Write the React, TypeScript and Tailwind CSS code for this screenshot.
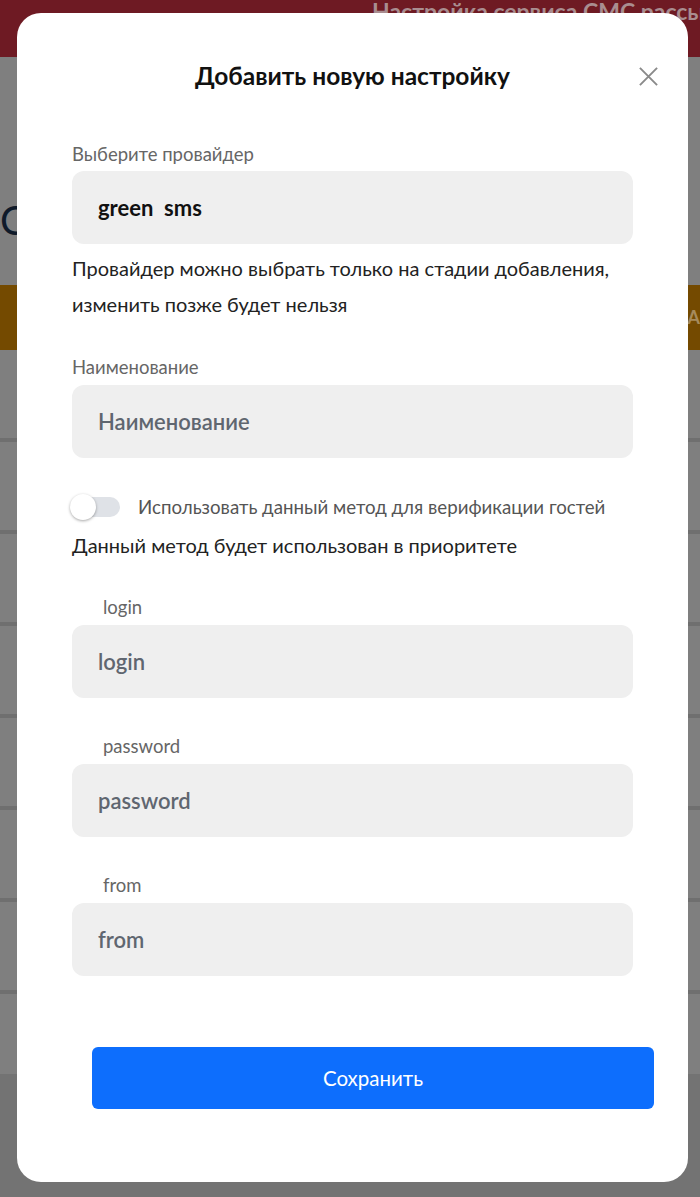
import React, { FC } from "react";

const font = { fontFamily: "Lato, 'Noto Sans', sans-serif" };

interface FieldProps {
  label: string;
  placeholder: string;
  indentLabel?: boolean;
  className?: string;
}

const Field: FC<FieldProps> = ({ label, placeholder, indentLabel, className }) => (
  <div className={className}>
    <p className={`text-[18.5px] leading-[20px] text-[#666] ${indentLabel ? "pl-[31px]" : ""}`}>{label}</p>
    <div className="mt-[8px] flex h-[73px] items-center rounded-[12px] bg-[#efefef] pl-[26px]">
      <span className="text-[22px] font-semibold text-[#5f6670]">{placeholder}</span>
    </div>
  </div>
);

const Background: FC = () => (
  <div className="flex h-[1197px] w-[700px] flex-col bg-[#7f7f7f]">
    <div className="h-[57px] bg-[#6e1a23] pl-[372px]">
      <p className="whitespace-nowrap text-[23px] font-bold leading-[22px] text-[#a98d90]">
        Настройка сервиса СМС рассылки
      </p>
    </div>
    <div className="h-[141px]" />
    <p className="h-[87px] text-[40px] leading-[44px] text-[#0f1a2a]">Сорт</p>
    <div className="flex h-[65px] items-center justify-end bg-[#744a00]">
      <span className="text-[18px] font-bold text-[#a68a5c]">ДА</span>
    </div>
    <div className="flex flex-col">
      {[0, 1, 2, 3, 4, 5, 6].map((i) => (
        <div key={i} className="h-[92px] border-b-[4px] border-[#6f6f6f]" />
      ))}
    </div>
    <div className="mt-[80px] flex-1 bg-[#737373]" />
  </div>
);

export default function App() {
  return (
    <div className="relative h-[1197px] w-[700px] overflow-hidden" style={font}>
      <Background />
      <div className="absolute left-[17px] top-[13px] h-[1169px] w-[671px] rounded-[24px] bg-white px-[55px] pt-[49px]">
        <div className="relative flex h-[28px] items-center justify-center">
          <h2 className="text-[24.5px] font-bold leading-[28px] text-[#111]">Добавить новую настройку</h2>
          <button className="absolute right-[-26px] top-[4px] text-[#8a8a8a]">
            <svg width="21" height="21" viewBox="0 0 22 22" fill="none" stroke="currentColor" strokeWidth="2">
              <path d="M2 2L20 20M20 2L2 20" />
            </svg>
          </button>
        </div>

        <div className="mt-[54px]">
          <p className="text-[18.5px] leading-[20px] text-[#666]">Выберите провайдер</p>
          <div className="mt-[7px] flex h-[73px] items-center rounded-[12px] bg-[#efefef] pl-[26px]">
            <span className="whitespace-pre text-[22px] font-bold text-[#111]">green  sms</span>
          </div>
          <p className="mt-[6px] text-[20px] leading-[36px] text-[#222]">
            Провайдер можно выбрать только на стадии добавления,
            <br />
            изменить позже будет нельзя
          </p>
        </div>

        <Field className="mt-[35px]" label="Наименование" placeholder="Наименование" />

        <div className="mt-[36px] flex h-[26px] items-center">
          <div className="relative h-[20px] w-[48px] rounded-full bg-[#dfe2e7]">
            <div className="absolute -left-[2px] -top-[3px] h-[26px] w-[26px] rounded-full bg-white shadow-[0_1px_3px_rgba(0,0,0,0.35)]" />
          </div>
          <span className="ml-[18px] whitespace-nowrap text-[18.7px] text-[#555]">
            Использовать данный метод для верификации гостей
          </span>
        </div>
        <p className="mt-[13px] text-[20px] leading-[24px] text-[#222]">Данный метод будет использован в приоритете</p>

        <Field className="mt-[40px]" label="login" placeholder="login" indentLabel />
        <Field className="mt-[38px]" label="password" placeholder="password" indentLabel />
        <Field className="mt-[38px]" label="from" placeholder="from" indentLabel />

        <button className="ml-[20px] mt-[71px] flex h-[62px] w-[562px] items-center justify-center rounded-[6px] bg-[#0d6efd] text-[20.5px] text-white">
          Сохранить
        </button>
      </div>
    </div>
  );
}
